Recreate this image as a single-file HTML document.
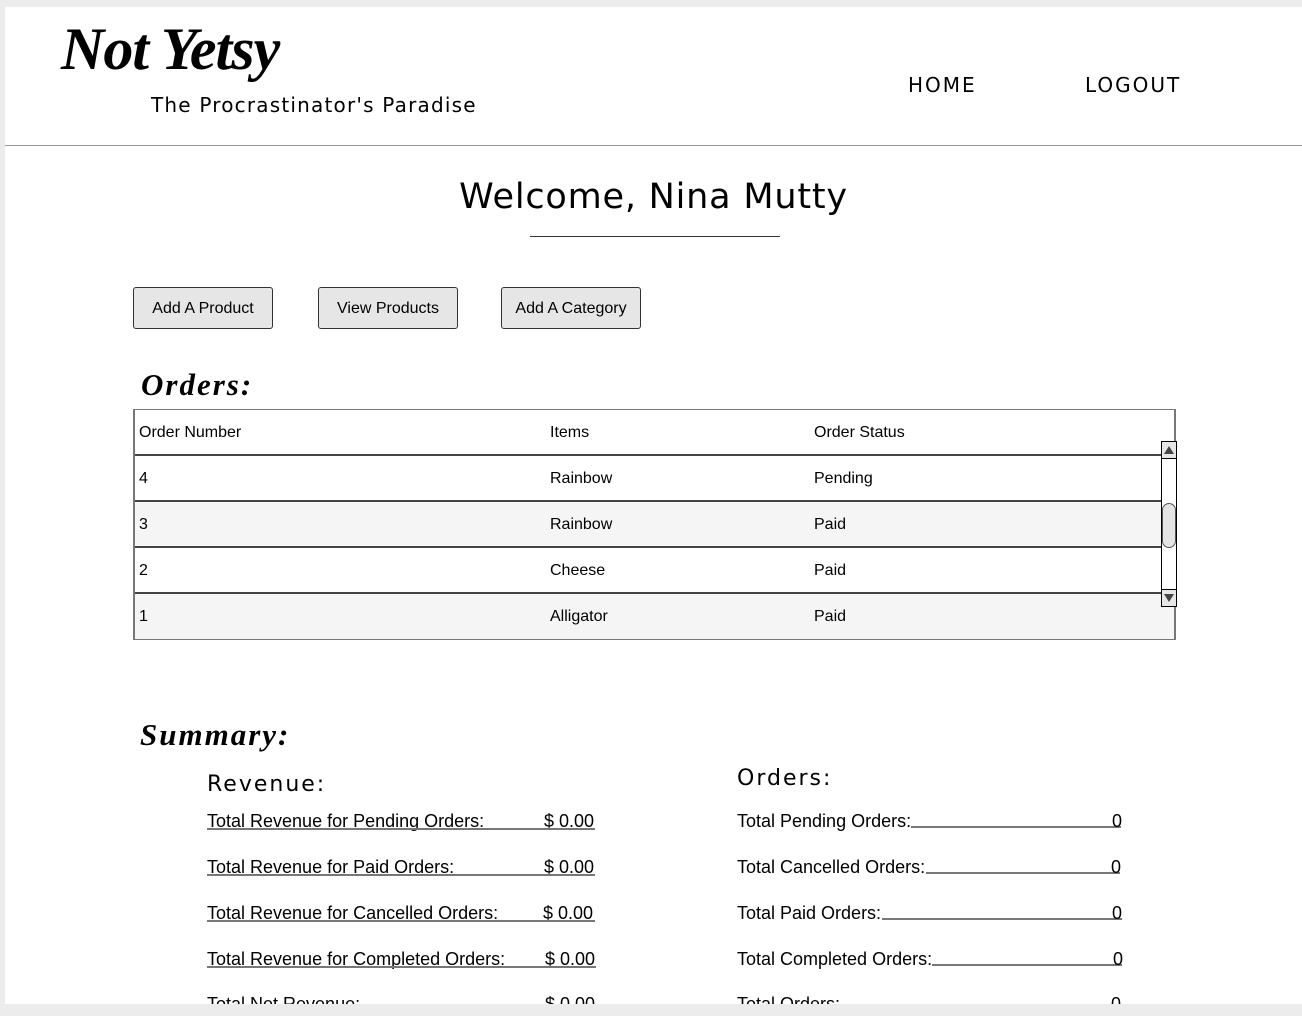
<!DOCTYPE html>
<html><head><style>
html,body{margin:0;padding:0}
body{width:1302px;height:1016px;background:#ececec;position:relative;overflow:hidden;font-family:"Liberation Sans",sans-serif;color:#000}
.page{position:absolute;left:5px;top:7px;width:1297px;height:997px;background:#fff;overflow:hidden}
.a{position:absolute;white-space:nowrap}
.logo{font-family:"Liberation Serif",serif;font-style:italic;font-weight:bold;font-size:60px;letter-spacing:-1px}
.script{font-family:"Liberation Serif",serif;font-style:italic;font-weight:bold;font-size:31px;letter-spacing:2px}
.sans2{font-family:"DejaVu Sans","Liberation Sans",sans-serif}
.btn{position:absolute;top:280px;width:140px;height:42px;border:1px solid #333;border-radius:3px;background:#e6e6e6;font-size:16px;text-align:center;line-height:42px;box-sizing:border-box}
.tbl{position:absolute;left:128px;top:402px;width:1043px;height:231px;border:1px solid #777;border-left:2px solid #777;border-right:2px solid #777;box-sizing:border-box}
.row{position:absolute;left:0;width:1027px;height:46px;font-size:16px}
.row span{position:absolute;top:14px}
.line{position:absolute;height:2px;background:#444;left:0;width:1027px}
.rv{position:absolute;font-size:18px;line-height:20px}
.ul{position:absolute;height:2px;background:#777}
</style></head><body>
<div class="page">
<div class="a logo" style="left:56px;top:8px">Not Yetsy</div>
<div class="a sans2" style="left:146px;top:86px;font-size:20px;letter-spacing:1.2px">The Procrastinator's Paradise</div>
<div class="a sans2" style="left:903px;top:66px;font-size:20px;letter-spacing:2px">HOME</div>
<div class="a sans2" style="left:1080px;top:66px;font-size:20px;letter-spacing:2px">LOGOUT</div>
<div class="a" style="left:0;top:138px;width:1297px;height:1px;background:#999"></div>
<div class="a sans2" style="left:0;width:1297px;text-align:center;top:170px;font-size:35px;letter-spacing:0.8px">Welcome, Nina Mutty</div>
<div class="a" style="left:525px;top:229px;width:250px;height:1px;background:#333"></div>
<div class="btn" style="left:128px">Add A Product</div>
<div class="btn" style="left:313px">View Products</div>
<div class="btn" style="left:496px">Add A Category</div>
<div class="a script" style="left:136px;top:360px">Orders:</div>
<div class="tbl">
 <div class="row" style="top:0;background:#fff"><span style="left:4px">Order Number</span><span style="left:415px">Items</span><span style="left:679px">Order Status</span></div>
 <div class="line" style="top:44px"></div>
 <div class="row" style="top:46px;background:#fff"><span style="left:4px">4</span><span style="left:415px">Rainbow</span><span style="left:679px">Pending</span></div>
 <div class="line" style="top:90px"></div>
 <div class="row" style="top:92px;background:#f5f5f5"><span style="left:4px">3</span><span style="left:415px">Rainbow</span><span style="left:679px">Paid</span></div>
 <div class="line" style="top:136px"></div>
 <div class="row" style="top:138px;background:#fff"><span style="left:4px">2</span><span style="left:415px">Cheese</span><span style="left:679px">Paid</span></div>
 <div class="line" style="top:182px"></div>
 <div class="row" style="top:184px;background:#f5f5f5;width:1039px;height:45px"><span style="left:4px">1</span><span style="left:415px">Alligator</span><span style="left:679px">Paid</span></div>
 <div style="position:absolute;left:1026px;top:31px;width:16px;height:166px;border:1px solid #000;background:#fff;box-sizing:border-box">
  <div style="position:absolute;left:0;top:0;width:14px;height:16px;border-bottom:1px solid #000;background:#e6e6e6"><div style="position:absolute;left:2px;top:4px;border-left:5px solid transparent;border-right:5px solid transparent;border-bottom:8px solid #444"></div></div>
  <div style="position:absolute;left:0;top:61px;width:14px;height:45px;border:1px solid #555;border-radius:7px;background:#e4e4e4;box-sizing:border-box"></div>
  <div style="position:absolute;left:0;bottom:0;width:14px;height:16px;border-top:1px solid #000;background:#e6e6e6"><div style="position:absolute;left:2px;top:4px;border-left:5px solid transparent;border-right:5px solid transparent;border-top:8px solid #444"></div></div>
 </div>
</div>
<div class="a script" style="left:135px;top:710px">Summary:</div>
<div class="a sans2" style="left:202px;top:765px;font-size:22px;letter-spacing:2px">Revenue:</div>
<div class="a sans2" style="left:732px;top:759px;font-size:22px;letter-spacing:2px">Orders:</div>

<div class="rv" style="left:202px;top:804px">Total Revenue for Pending Orders:</div><div class="rv" style="left:539px;top:804px">$ 0.00</div><div class="ul" style="left:202px;top:821px;width:388px"></div>
<div class="rv" style="left:202px;top:850px">Total Revenue for Paid Orders:</div><div class="rv" style="left:539px;top:850px">$ 0.00</div><div class="ul" style="left:202px;top:867px;width:388px"></div>
<div class="rv" style="left:202px;top:896px">Total Revenue for Cancelled Orders:</div><div class="rv" style="left:538px;top:896px">$ 0.00</div><div class="ul" style="left:202px;top:913px;width:388px"></div>
<div class="rv" style="left:202px;top:942px">Total Revenue for Completed Orders:</div><div class="rv" style="left:540px;top:942px">$ 0.00</div><div class="ul" style="left:202px;top:959px;width:389px"></div>
<div class="rv" style="left:202px;top:987px">Total Net Revenue:</div><div class="rv" style="left:540px;top:987px">$ 0.00</div>

<div class="rv" style="left:732px;top:804px">Total Pending Orders:</div><div class="ul" style="left:906px;top:819px;width:210px"></div><div class="rv" style="left:1107px;top:804px">0</div>
<div class="rv" style="left:732px;top:850px">Total Cancelled Orders:</div><div class="ul" style="left:921px;top:865px;width:194px"></div><div class="rv" style="left:1106px;top:850px">0</div>
<div class="rv" style="left:732px;top:896px">Total Paid Orders:</div><div class="ul" style="left:877px;top:911px;width:240px"></div><div class="rv" style="left:1107px;top:896px">0</div>
<div class="rv" style="left:732px;top:942px">Total Completed Orders:</div><div class="ul" style="left:927px;top:957px;width:190px"></div><div class="rv" style="left:1108px;top:942px">0</div>
<div class="rv" style="left:732px;top:987px">Total Orders:</div><div class="rv" style="left:1106px;top:987px">0</div>
</div>
</body></html>
